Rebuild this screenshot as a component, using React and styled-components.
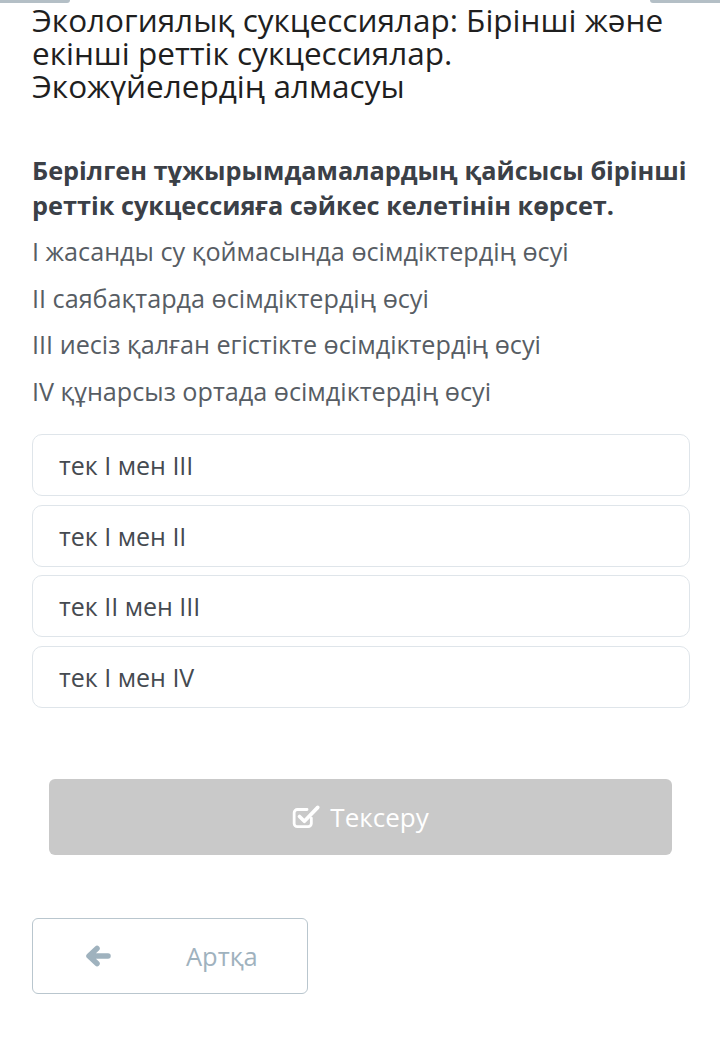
import React from "react";
import styled, { createGlobalStyle } from "styled-components";

const GlobalStyle = createGlobalStyle`
  body {
    margin: 0;
    background: #ffffff;
    font-family: "Open Sans", "Noto Sans", sans-serif;
  }
`;

const Page = styled.div`
  width: 720px;
  min-height: 1060px;
  background: #fff;
  display: flex;
  flex-direction: column;
`;

const TopStrip = styled.div`
  display: flex;
  justify-content: space-between;
  height: 3px;
  overflow: hidden;
`;

const TopTab = styled.div`
  width: 70px;
  height: 3px;
  background: #b4bfc6;
  border-radius: ${(p) => (p.right ? "0 0 0 4px" : "0 0 4px 0")};
`;

const Content = styled.div`
  padding: 0 30px 0 32px;
  display: flex;
  flex-direction: column;
`;

const Title = styled.h1`
  margin: 0;
  font-size: 31.5px;
  font-weight: 400;
  line-height: 33px;
  color: #1f1f1f;
`;

const Question = styled.h2`
  margin: 51px 0 0;
  font-size: 25.3px;
  font-weight: 700;
  line-height: 35px;
  color: #3b4047;
`;

const Statements = styled.div`
  margin-top: 12px;
  display: flex;
  flex-direction: column;
  gap: 14px;
`;

const Statement = styled.div`
  font-size: 25.2px;
  line-height: 32.5px;
  color: #575d64;
`;

const Options = styled.div`
  margin-top: 27px;
  display: flex;
  flex-direction: column;
  gap: 8.5px;
`;

const Option = styled.div`
  height: 60px;
  border: 1px solid #dfe5ea;
  border-radius: 10px;
  display: flex;
  align-items: center;
  padding-left: 26px;
  font-size: 25px;
  color: #454a50;
`;

const CheckButton = styled.button`
  margin: 71px 18px 0 17px;
  height: 76px;
  border: none;
  border-radius: 6px;
  background: #c9c9c9;
  color: #fff;
  font-family: inherit;
  font-size: 26px;
  display: flex;
  align-items: center;
  justify-content: center;
  gap: 9px;
`;

const BackButton = styled.button`
  margin-top: 63px;
  width: 276px;
  height: 76px;
  border: 1px solid #b9c6ce;
  border-radius: 6px;
  background: #fff;
  color: #9fb2be;
  font-family: inherit;
  font-size: 25.5px;
  display: flex;
  align-items: center;
  padding: 0 0 0 52px;
  gap: 75px;
`;

const CheckIcon = () => (
  <svg width="29" height="27" viewBox="0 0 27 25" fill="none">
    <path
      d="M18 14v5a3 3 0 0 1-3 3H5a3 3 0 0 1-3-3V9a3 3 0 0 1 3-3h9"
      stroke="#fff"
      strokeWidth="2.6"
      strokeLinecap="round"
    />
    <path
      d="M7 12.5l4.5 4.5L24 4"
      stroke="#fff"
      strokeWidth="3.4"
      strokeLinecap="round"
      strokeLinejoin="round"
    />
  </svg>
);

const ArrowIcon = () => (
  <svg width="26" height="22" viewBox="0 0 26 22" fill="none">
    <path
      d="M23 11H5M12 3.5L4 11l8 7.5"
      stroke="#9fb2be"
      strokeWidth="5.5"
      strokeLinecap="round"
      strokeLinejoin="round"
    />
  </svg>
);

const statements = [
  "I жасанды су қоймасында өсімдіктердің өсуі",
  "II саябақтарда өсімдіктердің өсуі",
  "III иесіз қалған егістікте өсімдіктердің өсуі",
  "IV құнарсыз ортада өсімдіктердің өсуі",
];

const options = ["тек I мен III", "тек I мен II", "тек II мен III", "тек I мен IV"];

function App() {
  return (
    <Page>
      <GlobalStyle />
      <TopStrip>
        <TopTab />
        <TopTab right />
      </TopStrip>
      <Content>
        <Title>
          Экологиялық сукцессиялар: Бірінші және
          <br />
          екінші реттік сукцессиялар.
          <br />
          Экожүйелердің алмасуы
        </Title>
        <Question>
          Берілген тұжырымдамалардың қайсысы бірінші реттік сукцессияға сәйкес
          келетінін көрсет.
        </Question>
        <Statements>
          {statements.map((s) => (
            <Statement key={s}>{s}</Statement>
          ))}
        </Statements>
        <Options>
          {options.map((o) => (
            <Option key={o}>{o}</Option>
          ))}
        </Options>
        <CheckButton>
          <CheckIcon />
          Тексеру
        </CheckButton>
        <BackButton>
          <ArrowIcon />
          Артқа
        </BackButton>
      </Content>
    </Page>
  );
}

export default App;
